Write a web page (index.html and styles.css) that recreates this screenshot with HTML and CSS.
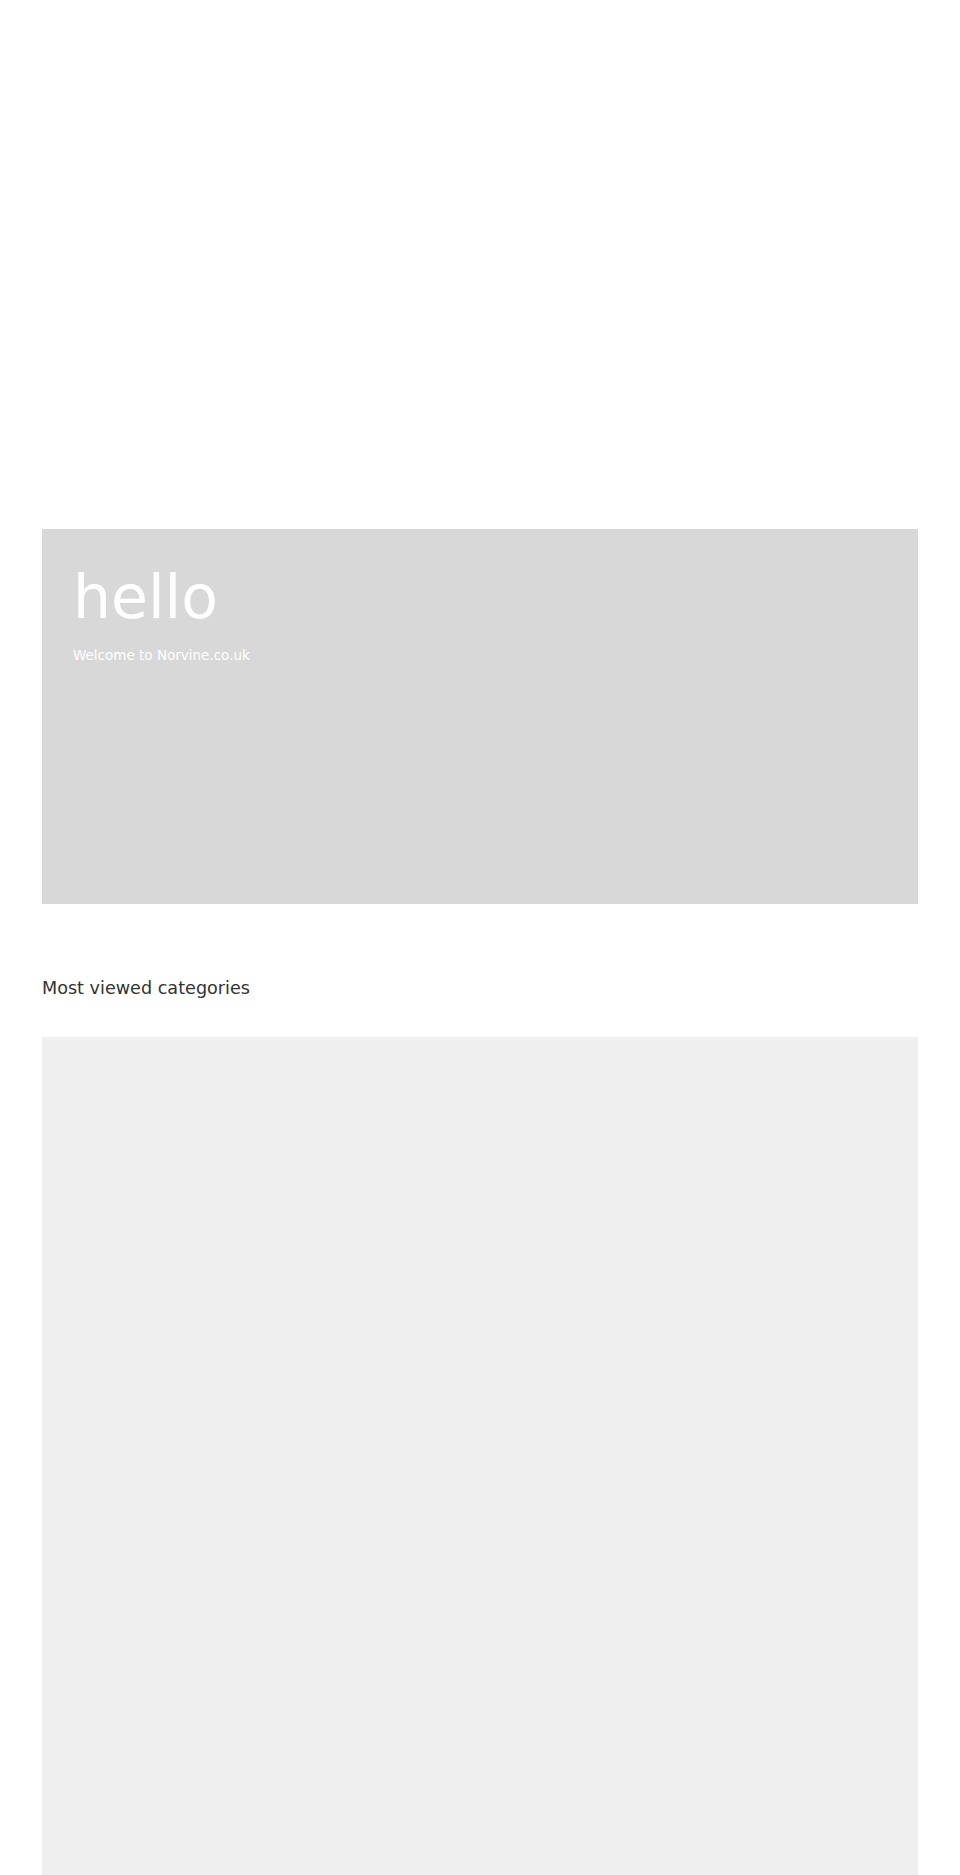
FILE: index.html
```html
<!DOCTYPE html>
<html>
<head>
<meta charset="utf-8">
<link rel="stylesheet" href="styles.css">
</head>
<body>
<div class="page">
  <div class="top-space"></div>
  <section class="hero">
    <h1 class="hero-title">hello</h1>
    <p class="hero-sub">Welcome to Norvine.co.uk</p>
  </section>
  <h2 class="section-title">Most viewed categories</h2>
  <div class="categories"></div>
</div>
</body>
</html>
```
FILE: styles.css
```css
html, body {
  margin: 0;
  padding: 0;
  background: #fff;
}
body {
  font-family: "DejaVu Sans", Verdana, sans-serif;
}
.page {
  padding: 0 42px;
}
.top-space {
  height: 529px;
}
.hero {
  background: #d8d8d8;
  height: 375px;
  box-sizing: border-box;
  padding: 33px 31px;
}
.hero-title {
  margin: 0;
  font-size: 60px;
  font-weight: normal;
  color: #fff;
  line-height: normal;
}
.hero-sub {
  margin: 15px 0 0;
  font-size: 13.5px;
  color: #fff;
}
.section-title {
  margin: 74px 0 39px;
  font-size: 17.6px;
  font-weight: normal;
  color: #333;
}
.categories {
  background: #efefef;
  height: 900px;
}
```
